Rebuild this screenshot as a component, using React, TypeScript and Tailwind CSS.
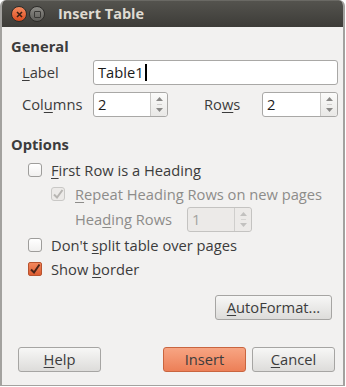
import React from "react";

const font = { fontFamily: '"Open Sans", "Noto Sans", sans-serif' };

function U({ children }: { children: React.ReactNode }) {
  return <span className="underline underline-offset-2 decoration-1">{children}</span>;
}

function Check({ checked, disabled }: { checked?: boolean; disabled?: boolean }) {
  if (checked && disabled) {
    return (
      <span className="flex h-[14px] w-[14px] shrink-0 items-center justify-center rounded-[3px] border border-[#c9c8c6] bg-[#eceae8]">
        <svg width="12" height="12" viewBox="0 0 12 12">
          <path d="M2 6.5 L5 9.5 L10.5 2" fill="none" stroke="#b7b5b2" strokeWidth="2" />
        </svg>
      </span>
    );
  }
  if (checked) {
    return (
      <span className="flex h-[14px] w-[14px] shrink-0 items-center justify-center rounded-[2px] border border-[#b8532f] bg-gradient-to-b from-[#f2875c] to-[#dd5c30]">
        <svg width="12" height="12" viewBox="0 0 12 12">
          <path d="M2 6.5 L5 9.5 L10.5 1.5" fill="none" stroke="#4a2418" strokeWidth="2" />
        </svg>
      </span>
    );
  }
  return <span className="h-[14px] w-[14px] shrink-0 rounded-[3px] border border-[#9e9d9b] bg-gradient-to-b from-white to-[#f1f0ef]" />;
}

function Spin({ value, disabled, w }: { value: string; disabled?: boolean; w: string }) {
  return (
    <div
      className={`flex h-[25px] shrink-0 rounded-[3px] border ${
        disabled ? "border-[#c4c3c1] bg-[#eceae8]" : "border-[#a9a8a6] bg-white"
      }`}
    >
      <div className={`${w} flex items-center px-[4px] ${disabled ? "text-[#a3a2a0]" : "text-[#1a1a1a]"}`}>
        {value}
      </div>
      <div
        className={`flex w-[17px] flex-col items-center justify-center gap-[3px] rounded-r-[3px] border-l ${
          disabled ? "border-[#cfcecc] bg-[#eceae8]" : "border-[#c9c8c6] bg-gradient-to-b from-[#fbfbfa] to-[#e9e8e6]"
        }`}
      >
        <svg width="7" height="4" viewBox="0 0 7 4">
          <path d="M0 4 L3.5 0 L7 4 Z" fill={disabled ? "#c2c1bf" : "#8a8987"} />
        </svg>
        <div className={`h-px w-[5px] ${disabled ? "bg-[#d6d5d3]" : "bg-[#cfcecc]"}`} />
        <svg width="7" height="4" viewBox="0 0 7 4">
          <path d="M0 0 L3.5 4 L7 0 Z" fill={disabled ? "#c2c1bf" : "#8a8987"} />
        </svg>
      </div>
    </div>
  );
}

function Button({ children, primary, w }: { children: React.ReactNode; primary?: boolean; w: string }) {
  return (
    <button
      className={`${w} h-[25px] shrink-0 rounded-[3px] border text-[14.7px] leading-none ${
        primary
          ? "border-[#c9653f] bg-gradient-to-b from-[#f7a583] to-[#ec7f57] text-[#3c3c3c]"
          : "border-[#a6a5a3] bg-gradient-to-b from-[#f7f7f6] to-[#dddcda] text-[#3c3c3c]"
      }`}
    >
      {children}
    </button>
  );
}

export default function App() {
  return (
    <div className="h-[387px] w-[346px] bg-white" style={font}>
      <div className="flex h-[386px] w-[345px] flex-col overflow-hidden rounded-t-[6px] border-x-2 border-b border-t-0 border-[#a3a29f] bg-[#f2f1f0]">
        {/* title bar */}
        <div className="-mx-[2px] flex h-[27px] shrink-0 items-center border-t border-[#6a6964] bg-gradient-to-b from-[#54534e] to-[#3d3c38] pl-[11px]">
          <div className="flex h-[16px] w-[16px] items-center justify-center rounded-full border border-[#2e2d2a] bg-gradient-to-b from-[#f58a5e] to-[#dc4a1c]">
            <svg width="7" height="7" viewBox="0 0 7 7">
              <path d="M1 1 L6 6 M6 1 L1 6" stroke="#3a1f14" strokeWidth="1.6" />
            </svg>
          </div>
          <div className="ml-[2px] flex h-[16px] w-[16px] items-center justify-center rounded-full border border-[#2e2d2a] bg-gradient-to-b from-[#8d8c87] to-[#5f5e5a]">
            <div className="h-[7px] w-[7px] rounded-[1px] border border-[#3a3936]" />
          </div>
          <span className="ml-[13px] text-[14.5px] font-bold text-[#dfdbd2]">Insert Table</span>
        </div>

        <div className="pl-[9px] pr-[5px] pt-[9px] text-[14.7px] text-[#3c3c3c]">
          {/* General */}
          <div className="h-[20px] font-bold leading-[20px]">General</div>
          <div className="mt-[4px] flex h-[25px] items-center pl-[11px]">
            <span className="w-[71px] shrink-0"><U>L</U>abel</span>
            <div className="flex h-[25px] w-[245px] shrink-0 items-center rounded-[3px] border border-[#a9a8a6] bg-white px-[4px] text-[#1a1a1a]">
              Table1<span className="ml-px h-[17px] w-[2px] bg-black" />
            </div>
          </div>
          <div className="mt-[7px] flex h-[25px] items-center pl-[11px]">
            <span className="w-[71px] shrink-0">Col<U>u</U>mns</span>
            <Spin value="2" w="w-[56px]" />
            <span className="ml-[36px] w-[58px] shrink-0">Ro<U>w</U>s</span>
            <Spin value="2" w="w-[57px]" />
          </div>

          {/* Options */}
          <div className="mt-[17px] h-[20px] font-bold leading-[20px]">Options</div>
          <div className="mt-[4px] flex h-[24px] items-center gap-[9px] pl-[17px]">
            <Check />
            <span><U>F</U>irst Row is a Heading</span>
          </div>
          <div className="flex h-[24px] items-center gap-[10px] pl-[40px] text-[#8d8c8a]">
            <Check checked disabled />
            <span className="whitespace-nowrap"><U>R</U>epeat Heading Rows on new pages</span>
          </div>
          <div className="mt-[1px] flex h-[25px] items-center pl-[64px] text-[#8d8c8a]">
            <span className="w-[112px] shrink-0">Hea<U>d</U>ing Rows</span>
            <Spin value="1" w="w-[46px]" disabled />
          </div>
          <div className="mt-[1px] flex h-[24px] items-center gap-[9px] pl-[17px]">
            <Check />
            <span>Don't <U>s</U>plit table over pages</span>
          </div>
          <div className="flex h-[24px] items-center gap-[9px] pl-[17px]">
            <Check checked />
            <span>Show <U>b</U>order</span>
          </div>

          <div className="mt-[14px] flex justify-end pr-[6px]">
            <Button w="w-[117px]"><U>A</U>utoFormat...</Button>
          </div>

          <div className="mt-[27px] flex items-center pl-[7px] pr-[3px]">
            <Button w="w-[83px]"><U>H</U>elp</Button>
            <div className="flex-1" />
            <div className="flex gap-[6px]">
              <Button primary w="w-[83px]">Insert</Button>
              <Button w="w-[83px]"><U>C</U>ancel</Button>
            </div>
          </div>
        </div>
      </div>
    </div>
  );
}
